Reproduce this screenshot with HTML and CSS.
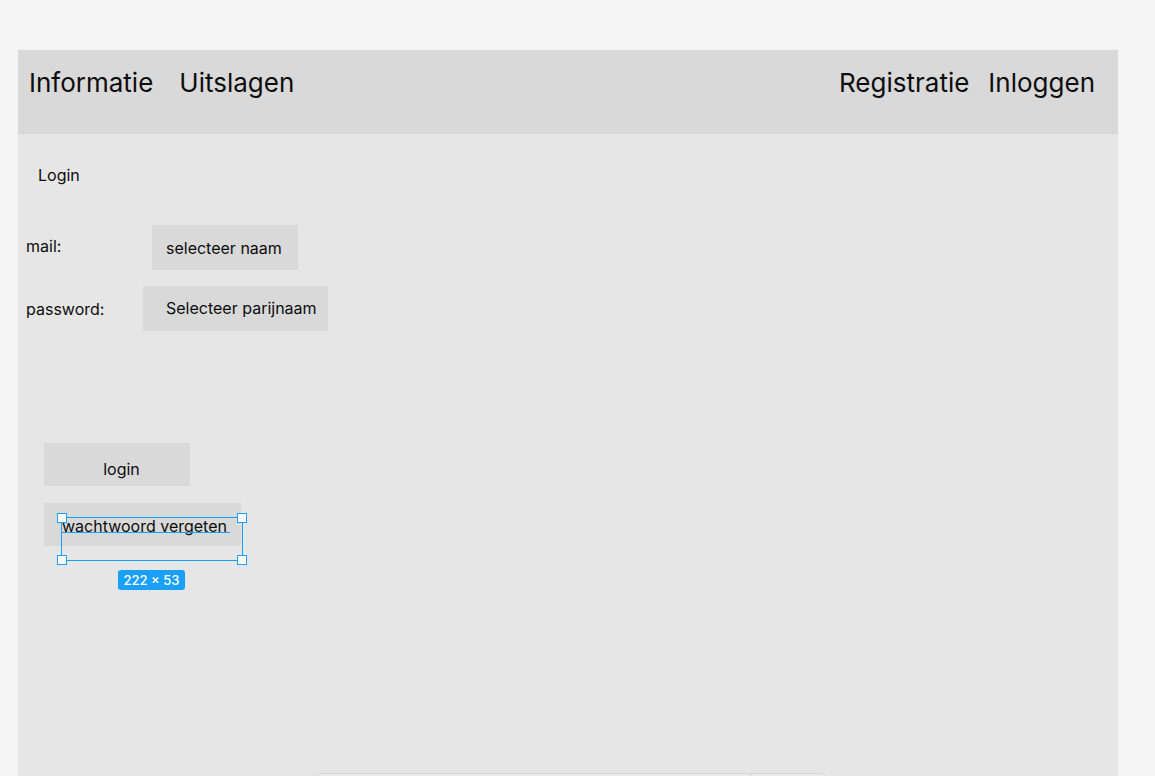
FILE: index.html
```html
<!DOCTYPE html>
<html lang="nl">
<head>
<meta charset="utf-8">
<title>Login</title>
<link rel="stylesheet" href="styles.css">
</head>
<body>
<div class="frame">
  <header class="topbar">
    <nav class="nav-left">
      <span class="nav-item">Informatie</span>
      <span class="nav-item">Uitslagen</span>
    </nav>
    <nav class="nav-right">
      <span class="nav-item">Registratie</span>
      <span class="nav-item">Inloggen</span>
    </nav>
  </header>
  <main class="content">
    <div class="title">Login</div>
    <div class="fields">
      <div class="row">
        <span class="label label-mail">mail:</span>
        <span class="box box-mail">selecteer naam</span>
      </div>
      <div class="row">
        <span class="label label-pass">password:</span>
        <span class="box box-pass">Selecteer parijnaam</span>
      </div>
    </div>
    <div class="buttons">
      <div class="btn btn-login">login</div>
      <div class="btn btn-forgot">
        <span class="forgot-text">wachtwoord vergeten</span>
        <div class="selection">
          <span class="baseline"></span>
          <span class="handle h-tl"></span>
          <span class="handle h-tr"></span>
          <span class="handle h-bl"></span>
          <span class="handle h-br"></span>
          <span class="size-badge">222 × 53</span>
        </div>
      </div>
    </div>
  </main>
</div>
<div class="toolbar"><span class="toolbar-div"></span></div>
</body>
</html>
```
FILE: styles.css
```css
html, body {
  margin: 0;
  padding: 0;
  height: 100%;
  overflow: hidden;
}
body {
  background: #f5f5f5;
  font-family: Inter, "Noto Sans", sans-serif;
  color: #0d0d0d;
  position: relative;
}
.frame {
  margin: 50px 0 0 18px;
  width: 1100px;
  height: 726px;
  background: #e6e6e6;
  display: flex;
  flex-direction: column;
}
.topbar {
  height: 84px;
  box-sizing: border-box;
  background: #d9d9d9;
  display: flex;
  justify-content: space-between;
  align-items: flex-start;
  padding: 17px 23px 0 11px;
}
.nav-left, .nav-right {
  display: flex;
}
.nav-left { gap: 26px; }
.nav-right { gap: 19px; }
.nav-item {
  font-size: 26px;
  line-height: 31px;
}
.content {
  flex: 1;
  position: relative;
  display: flex;
  flex-direction: column;
  align-items: flex-start;
}
.title {
  margin: 32px 0 0 20px;
  font-size: 16px;
  line-height: 19px;
}
.fields {
  margin: 40px 0 0 8px;
  display: flex;
  flex-direction: column;
  gap: 16px;
}
.row {
  display: flex;
  align-items: center;
}
.label {
  font-size: 16px;
  line-height: 19px;
}
.label-mail { width: 126px; margin-top: -3px; }
.label-pass { width: 117px; margin-top: 2px; }
.box {
  height: 45px;
  box-sizing: border-box;
  background: #d9d9d9;
  font-size: 16px;
  line-height: 19px;
  display: flex;
  align-items: center;
}
.box-mail { width: 146px; padding: 2px 0 0 14px; }
.box-pass { width: 185px; padding: 0 0 0 23px; }
.buttons {
  margin: 112px 0 0 26px;
  display: flex;
  flex-direction: column;
  gap: 17px;
}
.btn {
  height: 43px;
  box-sizing: border-box;
  background: #d9d9d9;
  font-size: 16px;
  line-height: 19px;
}
.btn-login {
  width: 146px;
  text-align: center;
  padding-top: 17px;
  padding-left: 9px;
}
.btn-forgot {
  width: 197px;
  position: relative;
  padding: 14px 0 0 18px;
}
.forgot-text {
  display: inline-block;
}
.selection {
  position: absolute;
  left: 17px;
  top: 14px;
  width: 182px;
  height: 44px;
  box-sizing: border-box;
  border: 1px solid #18a0fb;
}
.baseline {
  position: absolute;
  left: 0;
  top: 14px;
  width: 168px;
  height: 1px;
  background: #18a0fb;
}
.handle {
  position: absolute;
  width: 10px;
  height: 10px;
  box-sizing: border-box;
  background: #fff;
  border: 1px solid #18a0fb;
}
.h-tl { left: -5px; top: -5px; }
.h-tr { right: -5px; top: -5px; }
.h-bl { left: -5px; bottom: -5px; }
.h-br { right: -5px; bottom: -5px; }
.size-badge {
  position: absolute;
  left: 56px;
  top: 52px;
  width: 67px;
  height: 20px;
  box-sizing: border-box;
  background: #18a0fb;
  color: #fff;
  font-size: 13px;
  line-height: 20px;
  text-align: center;
  border-radius: 3px;
  font-weight: 500;
}
.toolbar {
  position: absolute;
  left: 313px;
  top: 773px;
  width: 515px;
  height: 40px;
  box-sizing: border-box;
  background: #ececec;
  border: 1px solid #d4d4d4;
  border-radius: 8px;
}
.toolbar-div {
  position: absolute;
  left: 436px;
  top: 0;
  width: 1px;
  height: 100%;
  background: #cfcfcf;
}
```
